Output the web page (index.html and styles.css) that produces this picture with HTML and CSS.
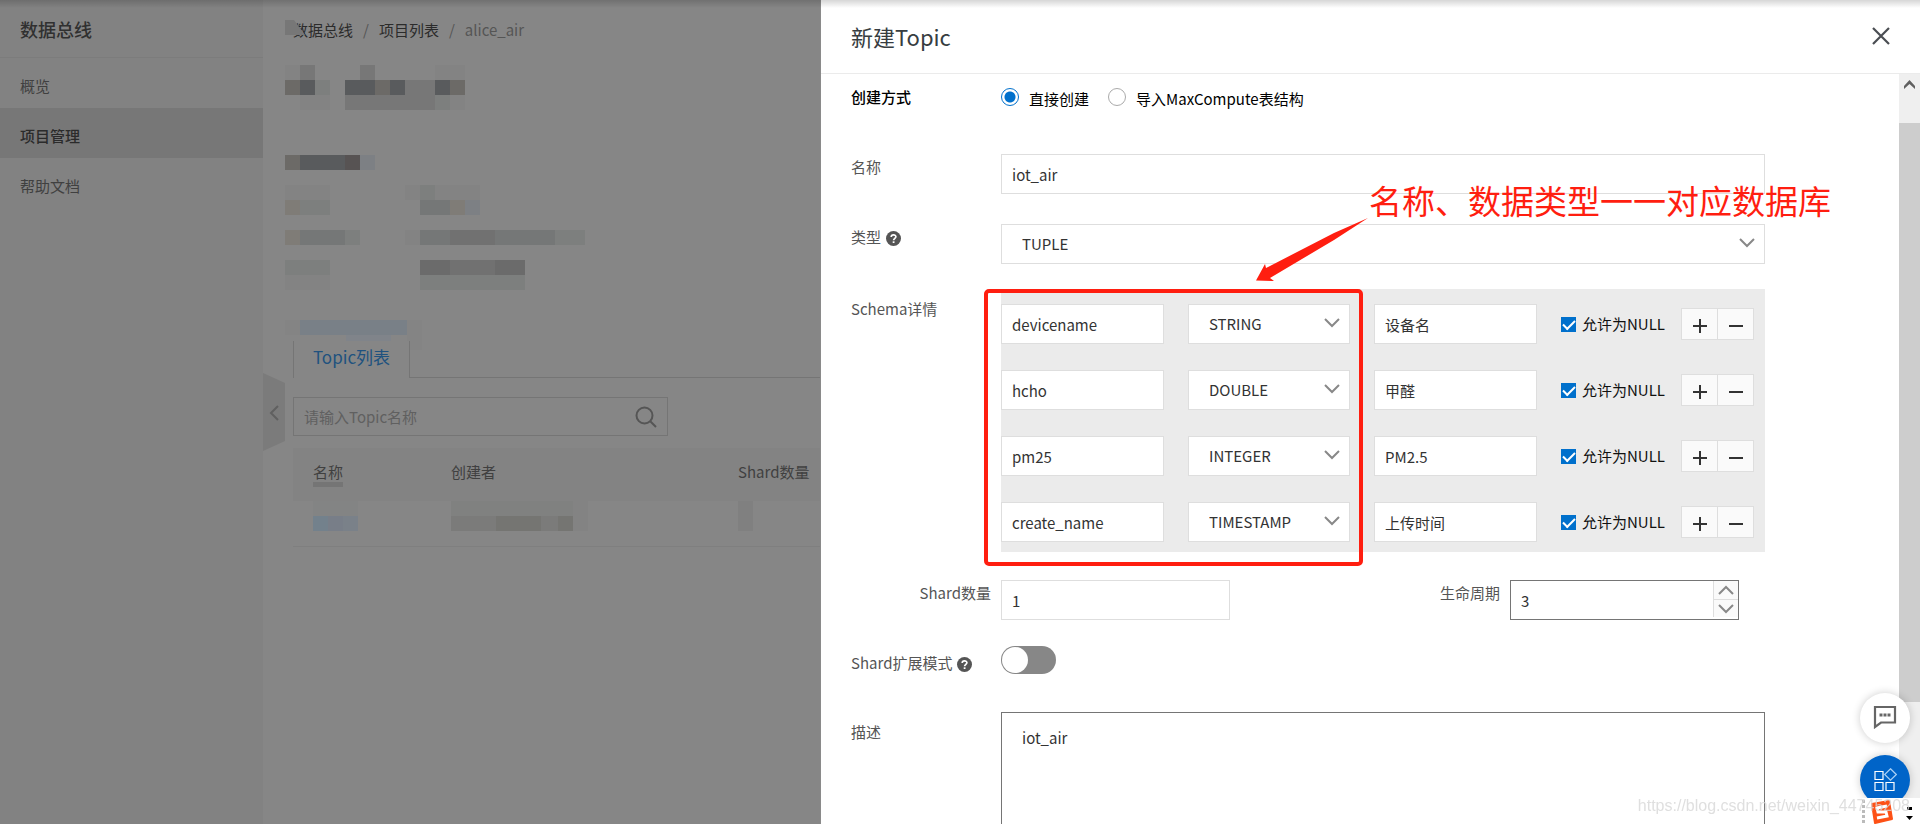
FILE: index.html
```html
<!DOCTYPE html>
<html lang="zh-CN">
<head>
<meta charset="utf-8">
<title>新建Topic</title>
<link rel="stylesheet" href="styles.css">
</head>
<body>
<div class="page">
  <nav class="sidebar">
    <h1 class="sidebar-title">数据总线</h1>
    <a class="nav-item" href="#">概览</a>
    <a class="nav-item active" href="#">项目管理</a>
    <a class="nav-item" href="#">帮助文档</a>
  </nav>

  <main class="main">
    <button class="collapse" aria-label="收起"><svg width="22" height="78" viewBox="0 0 22 78"><path d="M0 0L22 10V68L0 78z" fill="#7b7b7b"/><path d="M15 33L8 40L15 47" fill="none" stroke="#606060" stroke-width="2"/></svg></button>
    <div class="crumbs">
      <svg class="smudge" width="20" height="15" viewBox="0 0 20 15"><path d="M0 0H9L20 15H0z" fill="#777"/></svg>
      <a href="#">数据总线</a><span>/</span><a href="#">项目列表</a><span>/</span><em>alice_air</em>
    </div>
    <svg class="mosaic" width="310" height="225" viewBox="0 0 310 225" shape-rendering="crispEdges">
      <path fill="#838383" d="M0 0h15v15H0zM150 0h30v15h-30zM15 30h30v15H15zM165 30h15v15h-15zM0 120h45v15H0zM120 120h15v15h-15zM150 120h45v15h-45zM0 210h45v15H0zM120 165h15v15h-15z"/>
      <path fill="#777" d="M15 0h15v15H15zM75 0h15v15H75zM60 30h90v15H60zM120 15h30v15h-30z"/>
      <path fill="#7d7f7e" d="M30 15h15v15H30zM150 30h15v15h-15zM15 135h30v15H15zM0 195h45v15H0zM60 165h15v15H60zM270 165h30v15h-30zM135 210h105v15H135zM135 120h15v15h-15z"/>
      <path fill="#6c6a67" d="M0 15h15v15H0zM90 15h15v15H90zM0 90h15v15H0zM165 15h15v15h-15z"/>
      <path fill="#595b5d" d="M15 15h15v15H15zM60 15h30v15H60zM105 15h15v15h-15zM150 15h15v15h-15zM15 90h45v15H15z"/>
      <path fill="#575353" d="M60 90h15v15H60z"/>
      <path fill="#7d8084" d="M75 90h15v15H75zM180 135h15v15h-15z"/>
      <path fill="#757777" d="M135 135h30v15h-30zM15 165h45v15H15zM135 165h135v15H135z"/>
      <path fill="#7f7c77" d="M0 135h15v15H0zM0 165h15v15H0zM165 135h15v15h-15z"/>
      <path fill="#6b6b6b" d="M135 195h30v15h-30zM210 195h30v15h-30z"/>
      <path fill="#717171" d="M165 195h45v15h-45zM165 165h45v15h-45z"/>
    </svg>
    <div class="content">
      <div class="tabs"><svg class="tab-smudge" width="137" height="30" viewBox="0 0 137 30"><path d="M0 0h137v30h-15V15H0z" fill="#848484"/><path d="M15 0h107v15H15z" fill="#798087"/><path d="M61 15h45v15H61z" fill="#80848a"/></svg><button class="tab">Topic列表</button></div>
      <div class="search">
        <input type="text" placeholder="请输入Topic名称" aria-label="Topic名称">
        <button aria-label="搜索"><svg width="22" height="22" viewBox="0 0 22 22" fill="none" stroke="#555" stroke-width="2"><circle cx="9.500" cy="9.500" r="8"/><path d="M15 15L21 21"/></svg></button>
      </div>
      <table class="topics">
        <thead><tr><th class="c1"><span>名称</span></th><th class="c2">创建者</th><th>Shard数量</th></tr></thead>
        <tbody><tr>
          <td><svg width="60" height="30" viewBox="0 0 60 30" shape-rendering="crispEdges"><path d="M0 0h45v15H0z" fill="#838484"/><path d="M0 15h15v15H0z" fill="#73818c"/><path d="M15 15h15v15H15z" fill="#787e88"/><path d="M30 15h15v15H30z" fill="#7a8189"/></svg></td>
          <td><svg width="137" height="30" viewBox="0 0 137 30" shape-rendering="crispEdges"><path d="M0 0h137v30H0z" fill="#838383"/><path d="M0 0h122v15H0z" fill="#808180"/><path d="M0 15h122v15H0z" fill="#7b7b7a"/><path d="M45 15h45v15H45zM107 15h15v15h-15z" fill="#757572"/></svg></td>
          <td><svg width="15" height="30" viewBox="0 0 15 30"><path d="M0 0h15v30H0z" fill="#808080"/></svg></td>
        </tr></tbody>
      </table>
    </div>
  </main>

  <section class="drawer" aria-label="新建Topic">
    <header class="drawer-head">
      <h2>新建Topic</h2>
      <button class="close" aria-label="关闭"><svg width="18" height="18" viewBox="0 0 18 18"><path d="M1 1L17 17M17 1L1 17" stroke="#4a4d52" stroke-width="2.200"/></svg></button>
    </header>
    <div class="drawer-body">
      <form class="form">
        <div class="row row-mode">
          <span class="label strong">创建方式</span>
          <div class="field radios">
            <label><input type="radio" name="mode" checked>直接创建</label>
            <label><input type="radio" name="mode">导入MaxCompute表结构</label>
          </div>
        </div>
        <div class="row">
          <label class="label" for="name">名称</label>
          <div class="field"><input class="box" id="name" type="text" value="iot_air"></div>
        </div>
        <div class="row">
          <label class="label" for="type">类型<svg class="help" width="15" height="15" viewBox="0 0 15 15"><use href="#q"/></svg></label>
          <div class="field pick"><select class="box" id="type"><option>TUPLE</option></select><svg class="chev" width="16" height="10" viewBox="0 0 16 10"><use href="#down"/></svg></div>
        </div>
        <div class="row row-schema">
          <span class="label">Schema详情</span>
          <div class="field schema">
            <div class="mark-box"></div>
            <div class="schema-row">
              <input class="box" type="text" value="devicename" aria-label="字段名">
              <div class="pick"><select class="box" aria-label="字段类型"><option>STRING</option></select><svg class="chev" width="16" height="10" viewBox="0 0 16 10"><use href="#down"/></svg></div>
              <input class="box" type="text" value="设备名" aria-label="描述">
              <label class="null"><input type="checkbox" checked>允许为NULL</label>
              <div class="pm"><button type="button" aria-label="添加"><svg width="14" height="14"><use href="#plus"/></svg></button><button type="button" aria-label="删除"><svg width="14" height="14"><use href="#minus"/></svg></button></div>
            </div>
            <div class="schema-row">
              <input class="box" type="text" value="hcho" aria-label="字段名">
              <div class="pick"><select class="box" aria-label="字段类型"><option>DOUBLE</option></select><svg class="chev" width="16" height="10" viewBox="0 0 16 10"><use href="#down"/></svg></div>
              <input class="box" type="text" value="甲醛" aria-label="描述">
              <label class="null"><input type="checkbox" checked>允许为NULL</label>
              <div class="pm"><button type="button" aria-label="添加"><svg width="14" height="14"><use href="#plus"/></svg></button><button type="button" aria-label="删除"><svg width="14" height="14"><use href="#minus"/></svg></button></div>
            </div>
            <div class="schema-row">
              <input class="box" type="text" value="pm25" aria-label="字段名">
              <div class="pick"><select class="box" aria-label="字段类型"><option>INTEGER</option></select><svg class="chev" width="16" height="10" viewBox="0 0 16 10"><use href="#down"/></svg></div>
              <input class="box" type="text" value="PM2.5" aria-label="描述">
              <label class="null"><input type="checkbox" checked>允许为NULL</label>
              <div class="pm"><button type="button" aria-label="添加"><svg width="14" height="14"><use href="#plus"/></svg></button><button type="button" aria-label="删除"><svg width="14" height="14"><use href="#minus"/></svg></button></div>
            </div>
            <div class="schema-row">
              <input class="box" type="text" value="create_name" aria-label="字段名">
              <div class="pick"><select class="box" aria-label="字段类型"><option>TIMESTAMP</option></select><svg class="chev" width="16" height="10" viewBox="0 0 16 10"><use href="#down"/></svg></div>
              <input class="box" type="text" value="上传时间" aria-label="描述">
              <label class="null"><input type="checkbox" checked>允许为NULL</label>
              <div class="pm"><button type="button" aria-label="添加"><svg width="14" height="14"><use href="#plus"/></svg></button><button type="button" aria-label="删除"><svg width="14" height="14"><use href="#minus"/></svg></button></div>
            </div>
          </div>
        </div>
        <div class="row">
          <label class="label end" for="shard">Shard数量</label>
          <div class="field pair">
            <input class="box num" id="shard" type="text" value="1">
            <div class="life">
              <label for="life">生命周期</label>
              <div class="stepper">
                <input class="box num dark" id="life" type="text" value="3">
                <div class="steps"><button type="button" aria-label="增加"><svg width="16" height="10" viewBox="0 0 16 10"><use href="#up"/></svg></button><button type="button" aria-label="减少"><svg width="16" height="10" viewBox="0 0 16 10"><use href="#down"/></svg></button></div>
              </div>
            </div>
          </div>
        </div>
        <div class="row row-switch">
          <label class="label" for="expand">Shard扩展模式<svg class="help" width="15" height="15" viewBox="0 0 15 15"><use href="#q"/></svg></label>
          <div class="field"><input class="switch" id="expand" type="checkbox"></div>
        </div>
        <div class="row row-desc">
          <label class="label" for="desc">描述</label>
          <div class="field"><textarea id="desc">iot_air</textarea></div>
        </div>
      </form>
      <div class="scrollbar"><svg width="11" height="9" viewBox="0 0 11 9"><path d="M0 6L5.500 0L11 6V9L5.500 4L0 9z" fill="#606060"/></svg><div class="thumb"></div></div>
    </div>
    <p class="mark-text">名称、数据类型一一对应数据库</p>
    <svg class="mark-arrow" width="116" height="66" viewBox="0 0 116 66"><path d="M114 1L80 16L12 51L11 47L2 63.500L20 64L16 61L80 23z" fill="#ff1e10"/></svg>
  </section>
</div>

<button class="fab chat" aria-label="咨询"><svg width="24" height="24" viewBox="0 0 24 24"><path d="M2 2H22V17.500H8L2 22z" fill="none" stroke="#666" stroke-width="2.200"/><path d="M6.500 8.500h3v3h-3zM10.500 8.500h3v3h-3zM14.500 8.500h3v3h-3z" fill="#666"/></svg></button>
<button class="fab apps" aria-label="应用"><svg width="24" height="24" viewBox="0 0 24 24" fill="none" stroke="#fff" stroke-width="1.200"><path d="M2 3.500h8v8H2zM2 14.500h8v8H2zM13 14.500h8v8h-8z"/><path d="M17.500 .8L23.300 6.500L17.500 12.200L11.700 6.500z" stroke="#a9d0f5"/></svg></button>
<div class="ime"><svg width="56" height="26" viewBox="0 0 56 26"><path d="M1.500 2V26" stroke="#bbb" stroke-width="3" stroke-dasharray="3 2"/><path d="M10 6L27 3L30 21L13 25z" fill="#fd5116" stroke="#fd5116" stroke-width="2" stroke-linejoin="round"/><path d="M25 8L15 10L16 14L24 14L25 18L15 20" fill="none" stroke="#fff" stroke-width="3"/><path d="M45 9h5v3h-5z"/><path d="M44 18h7l-3.500 4z"/></svg></div>
<div class="watermark">https://blog.csdn.net/weixin_44745208</div>

<svg class="defs" width="0" height="0">
  <symbol id="down" viewBox="0 0 16 10"><path d="M1 1L8 8L15 1" fill="none" stroke="#888" stroke-width="2"/></symbol>
  <symbol id="up" viewBox="0 0 16 10"><path d="M1 9L8 2L15 9" fill="none" stroke="#888" stroke-width="2"/></symbol>
  <symbol id="plus" viewBox="0 0 14 14"><path d="M0 7H14M7 0V14" stroke="#333" stroke-width="2"/></symbol>
  <symbol id="minus" viewBox="0 0 14 14"><path d="M0 7H14" stroke="#333" stroke-width="2"/></symbol>
  <symbol id="q" viewBox="0 0 15 15"><circle cx="7.500" cy="7.500" r="7.500" fill="#555"/><path d="M5.200 6C5.200 3.200 9.900 3.200 9.900 5.800C9.900 7.300 7.600 7.400 7.600 9.300" fill="none" stroke="#fff" stroke-width="1.700"/><path d="M6.700 10.300h1.800v1.700h-1.800z" fill="#fff"/></symbol>
</svg>
</body>
</html>
```
FILE: styles.css
```css
* { box-sizing: border-box; }
body {
  margin: 0;
  height: 100vh;
  overflow: hidden;
  font: 15px/20px "Noto Sans CJK SC", sans-serif;
  color: #333;
}
button, input, select, textarea { font: inherit; color: inherit; margin: 0; }
button { padding: 0; border: 0; background: none; }
svg { display: block; }
a { color: inherit; text-decoration: none; }
.defs { position: absolute; }

.page {
  display: grid;
  grid-template-columns: 263px 557fr 1100fr;
  height: 100vh;
}
.page::before {
  content: "";
  position: absolute;
  inset: 0 0 auto;
  height: 8px;
  background: linear-gradient(rgba(0, 0, 0, .16), rgba(0, 0, 0, 0));
  z-index: 5;
}

.sidebar { background: #828282; color: #404040; }
.sidebar-title {
  margin: 0;
  height: 58px;
  padding: 0 20px;
  border-bottom: 1px solid #7c7c7c;
  font-size: 18px;
  line-height: 58px;
  font-weight: 500;
  color: #303030;
}
.nav-item { display: block; height: 50px; padding: 0 20px; line-height: 56px; }
.nav-item.active { background: #777; color: #2b2b2b; font-weight: 500; }

.main { position: relative; background: #868686; overflow: hidden; color: #404040; }
.collapse { position: absolute; left: 0; top: 373px; }
.crumbs { position: relative; display: flex; gap: 10px; padding: 20px 0 0 30px; height: 65px; white-space: nowrap; color: #2b2b2b; }
.crumbs span, .crumbs em { color: #555; font-style: normal; }
.smudge { position: absolute; left: 22px; top: 20px; }
.mosaic { margin-left: 22px; }
.content { padding: 51px 0 0 30px; }
.tabs { position: relative; display: flex; height: 37px; border-bottom: 1px solid #757575; }
.tab-smudge { position: absolute; left: -8px; top: -21px; }
.tab {
  position: relative;
  width: 117px;
  height: 37px;
  padding-bottom: 6px;
  border: solid #757575;
  border-width: 0 1px;
  background: #868686;
  color: #20527f;
  font-size: 17px;
}
.search {
  display: flex;
  align-items: center;
  width: 375px;
  height: 39px;
  margin: 19px 0 12px;
  padding: 0 10px;
  border: 1px solid #757575;
}
.search input { flex: 1; min-width: 0; padding: 0; border: 0; background: none; }
.search input::placeholder { color: #606060; opacity: 1; }
.topics { width: 100%; border-collapse: collapse; table-layout: fixed; }
.topics th { height: 53px; padding: 0 0 6px 20px; background: #838383; text-align: left; font-weight: 400; }
.topics th span { display: inline-block; border-bottom: 5px solid #757575; margin-bottom: -5px; }
.topics td { height: 45px; padding: 0 0 15px 20px; border-bottom: 1px solid #7f7f7f; }
.c1 { width: 138px; }
.c2 { width: 287px; }

.drawer {
  position: relative;
  display: flex;
  flex-direction: column;
  min-height: 0;
  height: 100vh;
  background: #fff;
  border-left: 1px solid #8a8a8a;
}
.drawer-head {
  display: flex;
  justify-content: space-between;
  align-items: center;
  flex: none;
  height: 74px;
  padding: 0 30px 2px;
  border-bottom: 1px solid #ebebeb;
}
.drawer-head h2 { margin: 0; font-size: 22px; line-height: 32px; font-weight: 400; color: #373d41; }
.drawer-body { display: flex; flex: 1; min-height: 0; }
.form { flex: 1; min-width: 0; height: 100%; overflow: hidden; padding: 12px 134px 0 30px; }
.row { display: grid; grid-template-columns: 150px 1fr; margin-bottom: 30px; }
.row-mode { height: 68px; margin-bottom: 0; }
.label { display: flex; align-items: flex-start; gap: 5px; padding-top: 3px; color: #555; white-space: nowrap; }
.label.strong { padding-top: 1px; color: #000; font-weight: 500; }
.label.end { justify-content: flex-end; padding-right: 10px; }
.help { margin-top: 4px; }
.field { min-width: 0; }
.box {
  display: block;
  width: 100%;
  height: 40px;
  padding: 0 10px;
  border: 1px solid #dedede;
  border-radius: 0;
  background: #fff;
}
.pick { position: relative; }
select.box { appearance: none; padding: 0 20px; }
.chev { position: absolute; right: 10px; top: 14px; pointer-events: none; }
.radios { display: flex; gap: 19px; color: #000; }
.radios label { display: flex; gap: 10px; height: 20px; padding-top: 3px; }
.radios input {
  appearance: none;
  flex: none;
  width: 18px;
  height: 18px;
  border: 1px solid #aaa;
  border-radius: 50%;
  background: #fff;
  margin-top: -1px;
}
.radios input:checked { border-color: #0070cc; background: radial-gradient(circle, #0070cc 5px, #fff 6px); }

.row-schema { margin-bottom: 28px; }
.row-schema .label { padding-top: 5px; }
.schema {
  position: relative;
  display: flex;
  flex-direction: column;
  gap: 26px;
  margin-top: -5px;
  padding: 15px 11px 10px 0;
  background: #ebebeb;
  color: #333;
}
.schema-row {
  display: grid;
  grid-template-columns: 163fr 162fr 163fr 96px 73px;
  column-gap: 24px;
  align-items: center;
}
.null { display: flex; align-items: center; gap: 6px; color: #111; white-space: nowrap; }
.null input {
  appearance: none;
  width: 15px;
  height: 15px;
  background: #0070cc;
}
.null input::before {
  content: "";
  display: block;
  width: 10px;
  height: 5px;
  margin: 3px 2px;
  border: solid #fff;
  border-width: 0 0 2px 2px;
  transform: rotate(-45deg);
}
.pm { display: flex; border: 1px solid #dedede; background: #fafafa; }
.pm button { display: flex; flex: 1; justify-content: center; height: 30px; padding-top: 10px; }
.pm button + button { border-left: 1px solid #dedede; }
.mark-box {
  position: absolute;
  inset: 0 auto auto -17px;
  width: 379px;
  height: 277px;
  border: 4px solid #ff1e10;
  border-radius: 5px;
  pointer-events: none;
  z-index: 2;
}

.pair { display: flex; justify-content: space-between; padding-right: 26px; }
.num { width: 229px; }
.dark { border-color: #757575; }
.life { display: flex; gap: 10px; color: #555; }
.life label { padding-top: 3px; }
.stepper { position: relative; color: #333; }
.steps { position: absolute; right: 1px; top: 1px; width: 25px; border-left: 1px solid #dedede; background: #fafafa; }
.steps button { display: flex; width: 100%; height: 18px; align-items: center; justify-content: center; }
.steps button + button { border-top: 1px solid #dedede; }
.row-switch { margin: -4px 0 38px; }
.row-switch .label { padding-top: 7px; }
.switch {
  appearance: none;
  display: block;
  width: 55px;
  height: 28px;
  padding: 1px;
  border-radius: 14px;
  background: #878787;
}
.switch::before { content: ""; display: block; width: 26px; height: 26px; border-radius: 50%; background: #fff; }
.row-desc .label { padding-top: 10px; }
textarea {
  display: block;
  width: 100%;
  height: 180px;
  padding: 15px 20px;
  border: 1px solid #757575;
  resize: none;
}
.scrollbar { display: flex; flex-direction: column; align-items: center; width: 21px; padding-top: 6px; background: #efefef; }
.thumb { width: 21px; height: 579px; margin-top: 34px; background: #cdcdcd; }

.mark-text { position: absolute; left: 548px; top: 179px; margin: 0; font-size: 33px; line-height: 42px; white-space: nowrap; color: #ff1e10; }
.mark-arrow { position: absolute; left: 433px; top: 217px; }

.fab { position: fixed; right: 10px; display: flex; justify-content: center; align-items: center; width: 50px; height: 50px; border-radius: 50%; box-shadow: 0 0 8px rgba(0, 0, 0, .2); }
.chat { bottom: 81px; padding-bottom: 2px; background: #fff; }
.apps { bottom: 19px; background: #0064c8; }
.ime { position: fixed; right: 0; bottom: 0; width: 58px; height: 26px; background: #fff; }
.watermark { position: fixed; right: 10px; bottom: 7px; font: 16px/22px "Liberation Sans", sans-serif; color: rgba(215, 215, 215, .8); }
```
